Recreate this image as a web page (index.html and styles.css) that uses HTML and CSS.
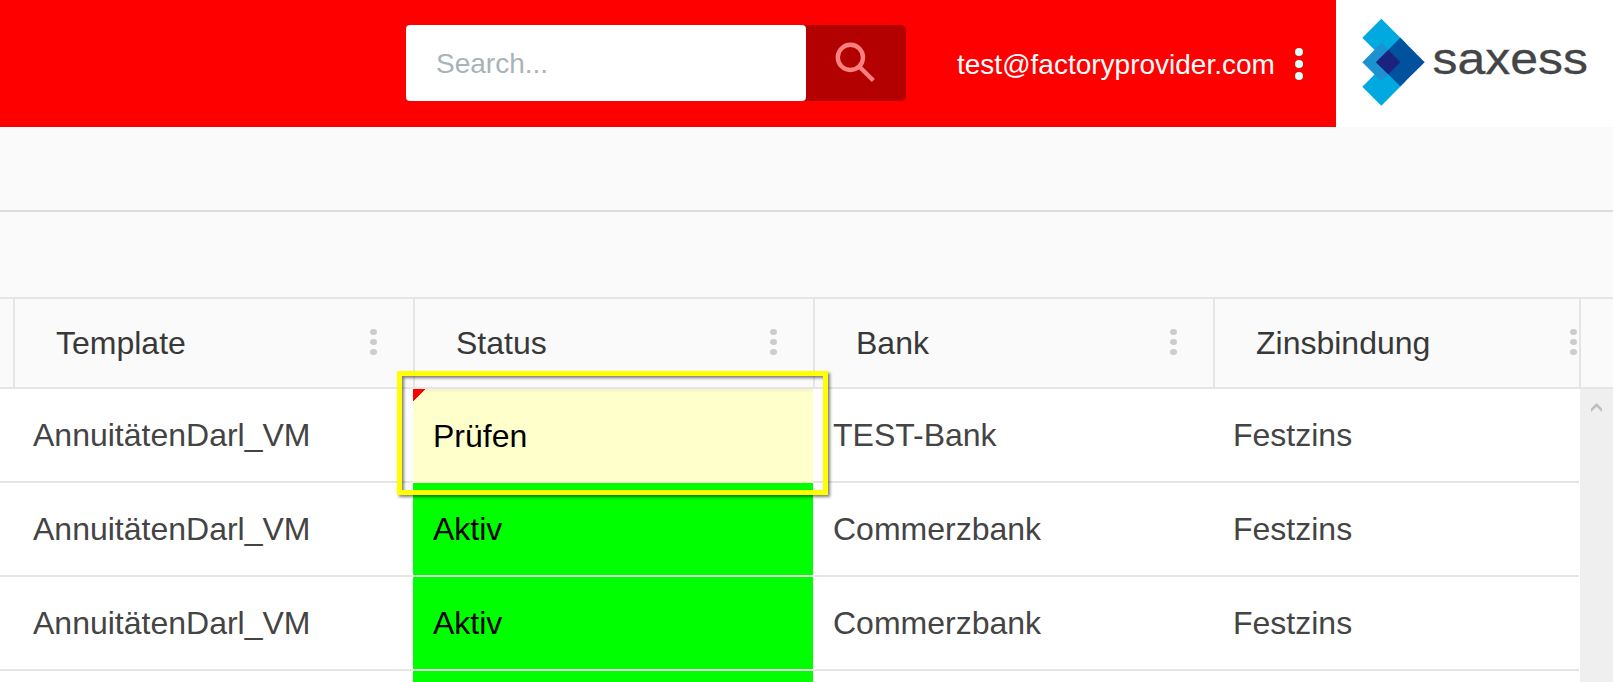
FILE: index.html
```html
<!DOCTYPE html>
<html lang="de">
<head>
<meta charset="utf-8">
<title>saxess</title>
<link rel="stylesheet" href="styles.css">
</head>
<body>
<div class="page">
  <header class="topbar">
    <div class="search">
      <div class="search-input">Search...</div>
      <div class="search-button">
        <svg class="search-icon" width="44" height="44" viewBox="0 0 44 44">
          <circle cx="16.4" cy="16.4" r="12.6" />
          <path d="M26 26.2L39.3 39.5" />
        </svg>
      </div>
    </div>
    <div class="account">test@factoryprovider.com</div>
    <svg class="account-menu" width="10" height="34" viewBox="0 0 10 34">
      <circle cx="5" cy="5" r="4" /><circle cx="5" cy="17" r="4" /><circle cx="5" cy="29" r="4" />
    </svg>
    <div class="brand">
      <svg width="277" height="127" viewBox="0 0 277 127">
        <g transform="translate(-16 0) scale(.33333)">
          <path fill="#00a9e0" d="M127 113L184 56L257 129L200 186ZM127 260L184 317L257 244L200 187Z" />
          <path fill="#1c92d0" d="M127 187L184 129L241 187L184 244Z" />
          <path fill="#00519e" d="M241 113L314 187L241 259L168 187Z" />
          <path fill="#1b237e" d="M205 150L241 187L205 223L168 187Z" />
        </g>
        <text class="brand-name" x="96.5" y="74" textLength="155.5" lengthAdjust="spacingAndGlyphs">saxess</text>
      </svg>
    </div>
  </header>
  <div class="toolbar"></div>
  <div class="filterbar"></div>
  <main class="grid">
    <div class="grid-head">
      <div class="head-stub"></div>
      <div class="head-cell"><span>Template</span><i class="dots"></i></div>
      <div class="head-cell"><span>Status</span><i class="dots"></i></div>
      <div class="head-cell"><span>Bank</span><i class="dots"></i></div>
      <div class="head-cell head-last"><span>Zinsbindung</span><i class="dots"></i></div>
      <div class="head-end"></div>
    </div>
    <div class="grid-body">
      <div class="rows">
        <div class="row">
          <div class="cell first">AnnuitätenDarl_VM</div>
          <div class="cell status changed">Prüfen</div>
          <div class="cell">TEST-Bank</div>
          <div class="cell">Festzins</div>
        </div>
        <div class="row">
          <div class="cell first">AnnuitätenDarl_VM</div>
          <div class="cell status active">Aktiv</div>
          <div class="cell">Commerzbank</div>
          <div class="cell">Festzins</div>
        </div>
        <div class="row">
          <div class="cell first">AnnuitätenDarl_VM</div>
          <div class="cell status active">Aktiv</div>
          <div class="cell">Commerzbank</div>
          <div class="cell">Festzins</div>
        </div>
        <div class="row">
          <div class="cell first"></div>
          <div class="cell status active"></div>
          <div class="cell"></div>
          <div class="cell"></div>
        </div>
      </div>
      <div class="scrollbar">
        <svg width="11" height="9" viewBox="0 0 11 9"><path d="M0 9V5.5L5.5 0L11 5.5V9L5.5 3.8Z" /></svg>
      </div>
    </div>
  </main>
  <div class="highlight"></div>
</div>
</body>
</html>
```

FILE: styles.css
```css
* { box-sizing: border-box; }

body {
  margin: 0;
  font-family: "Liberation Sans", Arial, sans-serif;
  background: #fafafa;
}

.page {
  position: relative;
  display: flex;
  flex-direction: column;
  width: 1613px;
  height: 682px;
  overflow: hidden;
}

.topbar {
  display: flex;
  align-items: center;
  flex: none;
  height: 127px;
  padding-left: 406px;
  background: #f00;
}

.search {
  display: flex;
  width: 500px;
  height: 76px;
  margin-bottom: 1px;
  border-radius: 5px;
  background: #b30000;
}

.search-input {
  width: 400px;
  padding-left: 30px;
  border-radius: 4px;
  background: #fff;
  color: #a9b3ba;
  font-size: 28px;
  line-height: 78px;
  height: 76px;
}

.search-button { padding: 16px 0 0 28px; }
.search-icon { display: block; fill: none; stroke: #ff8080; stroke-width: 4.4; }

.account {
  width: 336px;
  padding: 2px 0 0 51px;
  color: #fff;
  font-size: 28px;
  line-height: 32px;
  white-space: nowrap;
}

.account-menu { flex: none; margin-left: 52px; fill: #e0ffff; }

.brand { flex: none; width: 277px; height: 127px; margin-left: auto; background: #fff; }
.brand svg { display: block; }
.brand-name { fill: #444547; stroke: #444547; stroke-width: .3; font-size: 45px; }

.toolbar { flex: none; height: 85px; border-bottom: 2px solid #dcdcdc; }
.filterbar { flex: none; height: 85px; }

.grid { flex: 1; display: flex; flex-direction: column; min-height: 0; font-size: 32px; }

.grid-head {
  display: flex;
  flex: none;
  height: 92px;
  border-top: 2px solid #e5e5e5;
  border-bottom: 2px solid #e5e5e5;
  color: #383838;
}

.head-stub { width: 13px; }

.head-cell {
  display: flex;
  justify-content: space-between;
  width: 400px;
  padding: 0 36px 0 41px;
  border-left: 2px solid #e5e5e5;
  line-height: 89px;
}

.head-last { width: 366px; padding-right: 2px; }
.head-end { flex: 1; border-left: 2px solid #e5e5e5; }

.dots {
  width: 7px;
  height: 6px;
  margin-top: 30px;
  border-radius: 50%;
  background: #ccc;
  box-shadow: 0 10px #ccc, 0 20px #ccc;
}

.grid-body { display: flex; flex: 1; min-height: 0; background: #fff; }
.rows { width: 1579px; overflow: hidden; }

.row {
  display: flex;
  width: 1613px;
  height: 94px;
}

.cell {
  width: 400px;
  padding-left: 20px;
  border-bottom: 2px solid #e5e5e5;
  color: #444;
  line-height: 92px;
}

.first { width: 413px; padding-left: 33px; }
.status { color: #000; }
.active { background: #0f0 padding-box; }

.changed {
  border-bottom: 0;
  background: linear-gradient(135deg, #f00 8.5px, transparent 8.5px), linear-gradient(#f5f5c2, #ffffcc 4px);
  line-height: 94px;
}

.scrollbar { flex: 1; margin-left: 1px; padding: 14px 0 0 11px; background: #efefef; }
.scrollbar svg { display: block; fill: #bfbfbf; }

/* Frame drawn over the grid around the changed cell */
.highlight {
  position: absolute;
  left: 397px;
  top: 371px;
  width: 431px;
  height: 124px;
  border: 5px solid #ff0;
  filter: drop-shadow(2px 2px 1.5px rgba(0, 0, 0, .5));
}
```
